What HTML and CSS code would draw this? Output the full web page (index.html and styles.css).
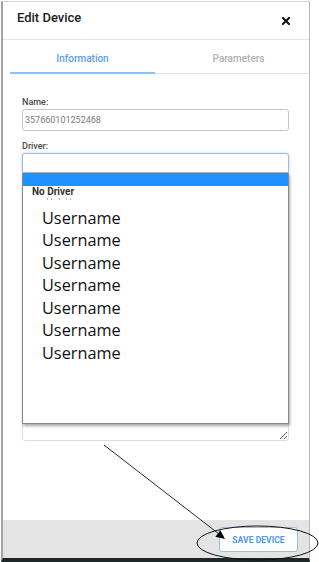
FILE: index.html
```html
<!DOCTYPE html>
<html>
<head>
<meta charset="utf-8">
<link rel="stylesheet" href="styles.css">
</head>
<body>
<div class="modal">
  <div class="header">
    <h1 class="title">Edit Device</h1>
    <svg class="close" width="8" height="8" viewBox="0 0 8 8"><path d="M1 1 L7 7 M7 1 L1 7" stroke="#111" stroke-width="2" stroke-linecap="square"/></svg>
  </div>
  <div class="tabs">
    <div class="tab tab-active">Information</div>
    <div class="tab tab-second">Parameters</div>
  </div>
  <div class="content">
    <label class="label">Name:</label>
    <div class="input">357660101252468</div>
    <label class="label label-driver">Driver:</label>
    <div class="select-wrap">
      <div class="select"></div>
      <div class="dropdown">
        <div class="opt-selected"></div>
        <div class="opt-bold">No Driver</div>
        <div class="opt-partial"><span></span><span></span><span></span><span></span><span></span></div>
        <ul class="users">
          <li>Username</li>
          <li>Username</li>
          <li>Username</li>
          <li>Username</li>
          <li>Username</li>
          <li>Username</li>
          <li>Username</li>
        </ul>
      </div>
    </div>
    <textarea class="textarea"></textarea>
  </div>
  <div class="footer">
    <button class="save">SAVE DEVICE</button>
  </div>
</div>
<svg class="annot" width="319" height="562" viewBox="0 0 319 562">
  <line x1="104" y1="445" x2="219" y2="534" stroke="#111" stroke-width="0.9"/>
  <polygon points="225,539 215.4,536.7 220.4,530.3" fill="#000"/>
  <ellipse cx="257.5" cy="543" rx="60.5" ry="17" fill="none" stroke="#111" stroke-width="1"/>
</svg>
</body>
</html>
```
FILE: styles.css
```css
* { box-sizing: border-box; }
html, body { margin: 0; padding: 0; background: #fff; }
body {
  width: 319px;
  height: 562px;
  position: relative;
  overflow: hidden;
  font-family: Roboto, "Liberation Sans", sans-serif;
}
.modal {
  margin: 1px 0 0 1px;
  width: 309px;
  height: 561px;
  border-left: 2px solid #a3a3a3;
  border-right: 1px solid #b8b8b8;
  border-top: 1px solid #d6d6d6;
  border-bottom: 4px solid #1f2828;
  display: flex;
  flex-direction: column;
  background: #fff;
}
.header {
  height: 38px;
  border-bottom: 1px solid #e6e6e6;
  display: flex;
  justify-content: space-between;
  align-items: flex-start;
  padding: 0 19px 0 14px;
  flex: none;
}
.title {
  margin: 8px 0 0 0;
  font-size: 13px;
  font-weight: 500;
  color: #1c1c1c;
  line-height: 15px;
}
.close { margin-top: 15px; }
.tabs {
  display: flex;
  margin: 0 1px 0 7px;
  border-bottom: 1px solid #e2e2e2;
  flex: none;
}
.tab {
  height: 34px;
  padding-top: 13px;
  font-size: 10px;
  line-height: 12px;
  font-weight: 500;
  text-align: center;
  color: #b0b0b0;
  margin-bottom: -1px;
  border-bottom: 2px solid transparent;
}
.tab-active {
  width: 145px;
  color: #5b9de4;
  border-bottom-color: #93bfec;
}
.tab-second {
  flex: 1;
  padding-left: 14px;
}
.content {
  flex: 1;
  padding: 23px 20px 0 19px;
}
.label {
  display: block;
  font-size: 9px;
  line-height: 11px;
  font-weight: 500;
  color: #4a4a4a;
  margin-bottom: 1px;
}
.label-driver { margin-top: 10px; }
.input {
  height: 22px;
  border: 1px solid #c6c6c6;
  border-radius: 3px;
  padding: 0 2px;
  font-size: 9px;
  line-height: 20px;
  color: #7a7a7a;
}
.select-wrap { position: relative; }
.select {
  height: 20px;
  border: 1px solid #a9b9cc;
  border-radius: 3px 3px 0 0;
  box-shadow: 0 0 3px rgba(90, 150, 230, 0.45);
  background: #fff;
}
.dropdown {
  position: absolute;
  top: 100%;
  left: 0;
  width: 267px;
  height: 251px;
  border: 1px solid #8a8a8a;
  border-top: none;
  background: #fff;
  box-shadow: 1px 2px 3px rgba(0, 0, 0, 0.35);
  overflow: hidden;
  z-index: 2;
}
.opt-selected {
  height: 13px;
  background: #1e90ff;
}
.opt-bold {
  font-size: 10px;
  line-height: 11px;
  font-weight: 700;
  color: #333;
  padding-left: 9px;
}
.opt-partial {
  height: 4px;
  display: flex;
  gap: 3px;
  padding: 1px 0 0 24px;
}
.opt-partial span {
  width: 1px;
  height: 2px;
  background: #b5b5b5;
}
.opt-partial span:nth-child(3) { margin-left: 4px; }
.opt-partial span:nth-child(4) { margin-left: 3px; }
.users {
  list-style: none;
  margin: 6px 0 0 0;
  padding: 0 0 0 19px;
  font-family: "Open Sans", sans-serif;
  font-size: 16.3px;
  line-height: 22.45px;
  color: #111;
}
.textarea {
  display: block;
  margin-top: 208px;
  width: 267px;
  height: 60px;
  border: 1px solid #dedede;
  border-radius: 3px;
  resize: vertical;
  background: #fff;
}
.footer {
  flex: none;
  height: 38px;
  background: #e4e4e4;
  display: flex;
  justify-content: flex-end;
  align-items: flex-start;
  padding: 7px 11px 0 0;
}
.save {
  width: 79px;
  height: 25px;
  background: #fff;
  border: 1px solid #93c1ef;
  border-radius: 3px;
  color: #5597e2;
  font-family: Roboto, "Liberation Sans", sans-serif;
  font-size: 8.6px;
  font-weight: 700;
  padding: 0;
}
.annot {
  position: absolute;
  top: 0;
  left: 0;
  pointer-events: none;
}
```
